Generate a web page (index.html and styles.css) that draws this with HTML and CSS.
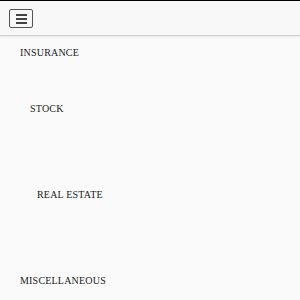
FILE: index.html
```html
<!DOCTYPE html>
<html lang="en">
  <head>
    <meta charset="utf-8" />
    <meta name="viewport" content="width=device-width, initial-scale=1.0" />
    <title>Categories</title>
    <link rel="stylesheet" href="styles.css">
  </head>

  <body>
    <header class="top-bar">
      <button class="menu-toggle" aria-label="Menu">
        <span></span>
        <span></span>
        <span></span>
      </button>
    </header>

    <ul class="categories">
      <li class="category">Insurance</li>
      <li class="category category-sub">Stock</li>
      <li class="category category-subsub">Real Estate</li>
      <li class="category">Miscellaneous</li>
    </ul>
  </body>
</html>
```

FILE: styles.css
```css
html,
body {
  margin: 0;
  padding: 0;
  background-color: #fafafa;
}

body {
  border-top: 1px solid #000;
  font-family: "Liberation Serif", "Times New Roman", serif;
  color: #1a1a1a;
}

.top-bar {
  display: flex;
  align-items: center;
  height: 35px;
  padding-left: 9px;
  box-sizing: border-box;
  background-color: #f8f8f8;
  border-bottom: 1px solid #cfcfcf;
  box-shadow: 0 1px 2px rgba(0, 0, 0, 0.08);
}

.menu-toggle {
  display: flex;
  flex-direction: column;
  justify-content: center;
  align-items: center;
  gap: 2px;
  width: 24px;
  height: 19px;
  padding: 0;
  margin-top: 1px;
  background: transparent;
  border: 1px solid #555;
  border-radius: 2px;
  cursor: pointer;
}

.menu-toggle span {
  display: block;
  width: 11px;
  height: 2px;
  background-color: #444;
}

.categories {
  list-style: none;
  margin: 0;
  padding: 12px 0 0 0;
}

.category {
  height: 86px;
  padding-left: 20px;
  font-size: 10px;
  line-height: 10px;
  letter-spacing: 0.2px;
  text-transform: uppercase;
}

.category:first-child {
  height: 56px;
}

.category:last-child {
  height: auto;
}

.category-sub {
  padding-left: 30px;
}

.category-subsub {
  padding-left: 37px;
}
```
